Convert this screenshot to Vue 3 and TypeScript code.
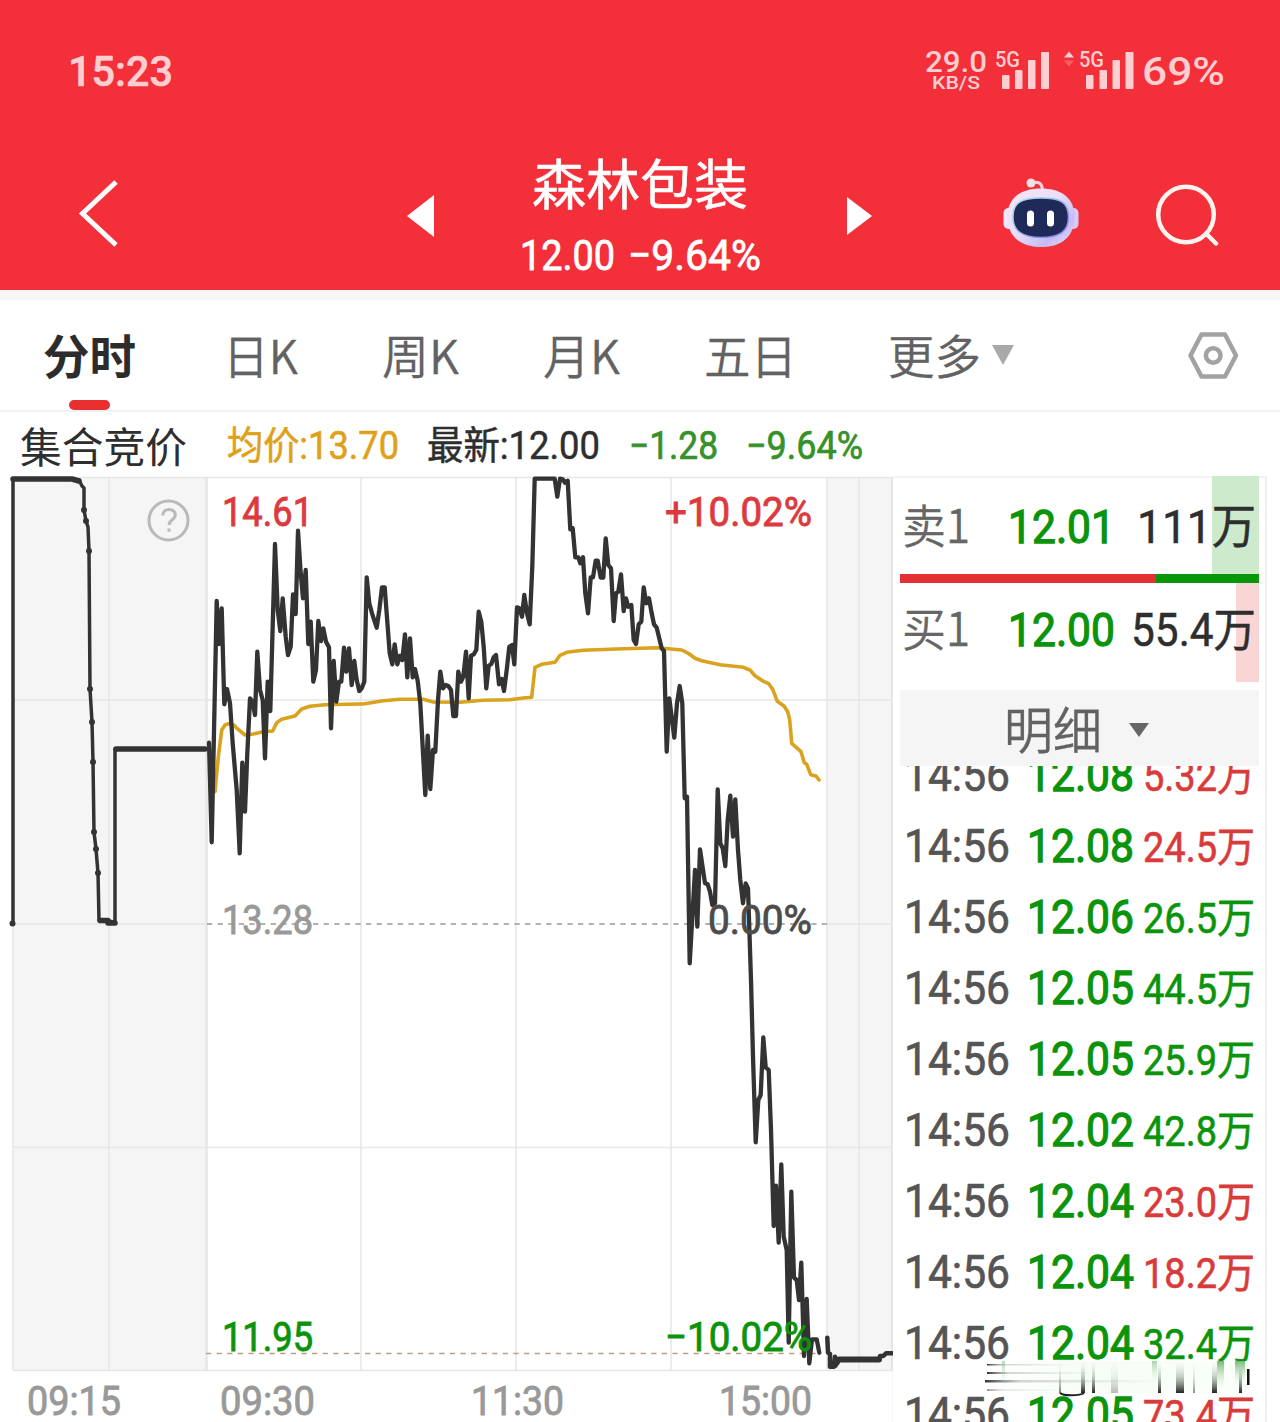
<script setup lang="ts">
import { h } from 'vue'

interface FitProps {
  t: string
  w: number
  s: number
  ml?: number
  wt?: number
  c?: string
  st?: number
}

/* One line of real text condensed to a fixed advance; its box ends on the baseline. */
const Fit = (p: FitProps) => {
  const height = Math.round(p.s * 0.74)
  const fill = p.c ?? 'currentColor'
  return h(
    'svg',
    { width: p.w, height, style: { marginLeft: `${p.ml ?? 0}px`, overflow: 'visible', flex: 'none', display: 'block' } },
    [
      h(
        'text',
        {
          x: 0,
          y: height,
          'font-size': p.s,
          'font-weight': p.wt ?? 400,
          fill,
          stroke: p.st ? fill : 'none',
          'stroke-width': p.st ?? 0,
          textLength: p.w,
          lengthAdjust: 'spacingAndGlyphs',
        },
        p.t,
      ),
    ],
  )
}
Fit.props = ['t', 'w', 's', 'ml', 'wt', 'c', 'st']

/* Series are kept in thirds of a pixel, relative to each segment's origin. */
type Segment = [number, number, string]
const trace = (segments: Segment[]): string =>
  segments
    .flatMap(([ox, oy, pts]) =>
      pts.split(' ').map((p) => {
        const [x, y] = p.split(',').map(Number)
        return `${(ox + x / 3).toFixed(1)},${(oy + y / 3).toFixed(1)}`
      }),
    )
    .join(' ')

const price = trace([
  [0, 470, '627,818 635,1117 650,393 657,522 665,415 673,703 681,657 690,700 698,820 710,960 719,1150 727,878 735,1025 742,850 750,685 758,697 765,735 772,545 780,660 788,690 795,865 803,635 811,723 825,222 833,420 841,483 848,385 857,500 864,555 872,530 879,373 887,432 894,182 902,310 909,385 917,300 925,522 932,455 940,635 948,600 955,453 963,513 970,475 978,515 987,532 993,775 1001,573 1009,695 1017,635 1024,635 1032,533 1039,605 1047,535 1055,645 1063,573 1070,630 1078,663'],
  [350, 470, '35,655 43,635 50,322 58,400 66,430 80,473 88,420 96,352 104,352 112,455 119,550 127,583 134,523 142,583 150,557 157,570 165,493 172,622 180,505 188,622 195,597 203,633 211,700 226,975 233,797 241,957 249,840 256,845 264,690 271,605 279,655 287,645 295,648 303,660 310,738 318,738 325,605 333,635 340,620 348,545 356,685 363,557 371,553 379,540 386,425 394,455 401,530 409,655 416,587 424,582 431,562 438,555 447,643 455,627 462,663 470,600 478,530 486,525 493,583 501,412 508,415 516,440 523,375 531,430 539,463 547,290 554,26 614,26 622,80 630,26 638,28 645,38 653,32 661,178 668,175 676,262 685,262 691,280 699,262 706,370 714,430 722,322 729,322 737,272 743,272 752,323 760,323 767,205 775,285 783,295 791,453 798,370 805,365 813,313 821,423 828,385 835,410 844,405 851,510 858,522 866,463 874,455 881,352 889,400 897,385 905,430 912,463 920,473 935,535 942,543 950,845 958,685 973,803 981,700 989,648 997,700 1004,985 1011,980'],
  [640, 620, '149,1030 165,750 172,920 180,688 195,790 203,793 210,815 217,855 225,850 233,508 241,670 248,685 256,738 263,600 271,527 279,650 286,538 294,690 301,780 309,850 317,790 324,805'],
  [700, 980, '153,0 159,230 167,487 175,360 182,345 190,172 197,262 206,270 213,450 221,738 228,617 236,788 244,553 251,770 260,810 266,1088 274,635 282,893 290,900 297,960 304,848 312,1128 320,957 328,1150 336,1078 350,1078 358,1118'],
])

const average = trace([
  [0, 470, '645,965 655,860 665,780 675,765 690,760 702,766 712,776 735,795 760,792 790,785 818,783 830,758 845,748 885,738 905,717 930,709 975,704 1078,702'],
  [350, 470, '40,702 100,692 150,688 220,688 250,696 330,697 400,691 480,689 520,684 545,682 555,592 575,583 615,577 630,556 650,547 700,541 800,537 920,533'],
  [640, 620, '68,85 125,90 145,100 165,115 185,122 240,134 310,142 330,150 345,167 370,184 385,190 398,208 412,244 432,258 443,275 449,300 455,370 483,395 493,428 500,433 512,464 528,468 537,480'],
])

const closing = trace([[700, 980, '382,1073 384,1118 390,1122 390,1160 402,1160 405,1130 412,1150 418,1138 538,1138 540,1128 550,1128 558,1120 575,1120']])

const auction = '13,923 13,479 72,479 79,480 82,486 84,488 84,510 86,521 88,527 89,551 90,689 92,722 93,762 94,832 96,849 98,873 99,920 115,922 115,749 206,749'
const dots = [[84, 510], [86, 521], [89, 551], [90, 689], [92, 722], [93, 762], [94, 832], [96, 849], [98, 873], [12.5, 923.5]]

const columns = [13, 109, 361, 516, 671, 827, 859]

const GREEN = '#0b940b'
const RED = '#dc3a3e'
const labels = [
  { x: 222, y: 526, w: 91, t: '14.61', c: RED },
  { x: 665, y: 526, w: 147, t: '+10.02%', c: RED },
  { x: 222, y: 934, w: 91, t: '13.28', c: '#999' },
  { x: 708, y: 934, w: 104, t: '0.00%', c: '#4c4c4c' },
  { x: 222, y: 1351, w: 91, t: '11.95', c: GREEN },
  { x: 665, y: 1351, w: 147, t: '−10.02%', c: GREEN },
  { x: 27, y: 1415, w: 94, t: '09:15', c: '#999' },
  { x: 220, y: 1415, w: 95, t: '09:30', c: '#999' },
  { x: 471, y: 1415, w: 93, t: '11:30', c: '#999' },
  { x: 719, y: 1415, w: 93, t: '15:00', c: '#999' },
]

const tabs = [
  { t: '日K', w: 75, ml: 87 },
  { t: '周K', w: 77, ml: 84 },
  { t: '月K', w: 77, ml: 84 },
  { t: '五日', w: 93, ml: 84 },
  { t: '更多', w: 93, ml: 91 },
]

const ticks = [
  ['12.08', '5.32万', 1],
  ['12.08', '24.5万', 1],
  ['12.06', '26.5万', 0],
  ['12.05', '44.5万', 0],
  ['12.05', '25.9万', 0],
  ['12.02', '42.8万', 0],
  ['12.04', '23.0万', 1],
  ['12.04', '18.2万', 1],
  ['12.04', '32.4万', 0],
  ['12.05', '73.4万', 1],
] as [string, string, number][]
</script>

<template>
  <div class="screen">
    <header class="top">
      <div class="status">
        <Fit t="15:23" :w="105" :s="43" :wt="500" :st=".6" :ml="1" />
        <div class="signals">
          <div class="speed">
            <Fit t="29.0" :w="62" :s="29" :wt="500" />
            <Fit t="KB/S" :w="48" :s="19" :wt="500" />
          </div>
          <svg class="signal" width="144" height="42" viewBox="994 49 144 42">
            <g fill="currentColor">
              <text x="995" y="67" font-size="21.5" font-weight="500" textLength="25" lengthAdjust="spacingAndGlyphs">5G</text>
              <rect x="1002" y="75" width="7.5" height="14" rx="1" />
              <rect x="1015" y="70" width="7.5" height="19" rx="1" />
              <rect x="1028" y="60" width="7.5" height="29" rx="1" />
              <rect x="1041" y="52" width="8" height="37" rx="1" />
              <path d="M1064 57.500l5-6 5 6z" />
              <path d="M1064 60.500l5 6 5-6z" opacity=".3" />
              <text x="1079" y="67" font-size="21.5" font-weight="500" textLength="25" lengthAdjust="spacingAndGlyphs">5G</text>
              <rect x="1086" y="75" width="7.5" height="14" rx="1" />
              <rect x="1099.500" y="70" width="7.500" height="19" rx="1" />
              <rect x="1112.500" y="60" width="7.500" height="29" rx="1" />
              <rect x="1125.500" y="52" width="8" height="37" rx="1" />
            </g>
          </svg>
          <Fit class="battery" t="69%" :w="83" :s="39.5" :wt="500" :ml="4" />
        </div>
      </div>
      <div class="nav">
        <svg class="back" width="44" height="70" viewBox="76 179 44 70" fill="none" stroke="#fff" stroke-width="5">
          <path d="M116 182 82.500 213.500 116 245" />
        </svg>
        <svg class="prev" width="27" height="42" viewBox="0 0 27 42"><path d="M0 21 27 0v42z" fill="#fff" /></svg>
        <div class="title">
          <Fit t="森林包装" :w="216" :s="54" :st=".5" />
          <div class="quote">
            <Fit t="12.00" :w="95" :s="43" :st=".8" />
            <Fit t="−9.64%" :w="133" :s="43" :st=".8" :ml="13" />
          </div>
        </div>
        <svg class="next" width="25" height="38" viewBox="0 0 25 38"><path d="M25 19 0 0v38z" fill="#fff" /></svg>
        <svg class="robot" width="76" height="72" viewBox="1003 177 76 72">
          <defs>
            <linearGradient id="shell" x1="0" y1="0" x2="1" y2="1">
              <stop offset="0" stop-color="#f9e6f3" />
              <stop offset=".45" stop-color="#e9dff8" />
              <stop offset=".75" stop-color="#c5bbf3" />
              <stop offset="1" stop-color="#eadcf5" />
            </linearGradient>
            <linearGradient id="rim" x1="0" y1="0" x2="1" y2="1">
              <stop offset="0" stop-color="#9fe6f4" />
              <stop offset="1" stop-color="#8c79e8" />
            </linearGradient>
          </defs>
          <path d="M1032 183c6-2 10 0 10.500 7" fill="none" stroke="#f8d3dd" stroke-width="3" />
          <circle cx="1031" cy="183" r="4.500" fill="#fbdfe7" />
          <rect x="1003.500" y="208" width="12" height="21" rx="5" fill="#eee6fa" />
          <rect x="1066.500" y="208" width="12" height="21" rx="5" fill="#d9c9f5" />
          <path d="M1041 188.500c19 0 31 8 33.500 24 1.500 23-12 34.500-33.500 34.500s-35-11.500-33.500-34.500c2.500-16 14.500-24 33.500-24z" fill="url(#shell)" />
          <path d="M1041 198c20 0 27.500 4.500 27.500 19s-9 20.500-27.500 20.500-28-6-28-20.500 8-19 28-19z" fill="#1f2a58" stroke="url(#rim)" stroke-width="1.500" />
          <rect x="1027" y="210.500" width="7" height="16" rx="3.500" fill="#fff" />
          <rect x="1047" y="210.500" width="7" height="16" rx="3.500" fill="#fff" />
        </svg>
        <svg class="search" width="64" height="64" viewBox="1155 183 64 64" fill="none" stroke="#fff3ee" stroke-width="4.500" stroke-linecap="round">
          <circle cx="1186" cy="214.500" r="27.800" />
          <path d="M1206 233.500l10 10" />
        </svg>
      </div>
    </header>

    <nav class="tabs">
      <Fit t="分时" :w="93" :s="47" :wt="700" :ml="43" c="#2c2c2c" />
      <Fit v-for="tab in tabs" :key="tab.t" :t="tab.t" :w="tab.w" :s="47" :ml="tab.ml" :wt="350" :st=".3" />
      <svg class="caret" width="22" height="20" viewBox="0 0 22 20"><path d="M0 0h22L11 20z" fill="#a9a9a9" /></svg>
      <svg class="gear" width="52" height="50" viewBox="1187 331 52 50" fill="none" stroke="#a2a2a2" stroke-width="4.500" stroke-linejoin="round">
        <path d="M1201.500 334.500h23.500l11 21-11 21h-23.500l-11-21z" />
        <circle cx="1213.200" cy="355.500" r="7.300" />
      </svg>
      <i class="underline"></i>
    </nav>

    <div class="summary">
      <Fit class="auction" t="集合竞价" :w="167" :s="41.500" :ml="20" />
      <Fit t="均价:13.70" :w="172" :s="38.500" :ml="40" :st=".6" c="#dfa118" />
      <Fit t="最新:12.00" :w="173" :s="38.500" :ml="28" :st=".5" />
      <Fit t="−1.28" :w="89" :s="38.500" :ml="29" :st=".7" c="#36912a" />
      <Fit t="−9.64%" :w="117" :s="38.500" :ml="28" :st=".7" c="#36912a" />
    </div>

    <main class="body">
      <svg class="chart" width="893" height="946" viewBox="0 476 893 946">
        <rect x="13" y="477" width="194" height="893" fill="#f5f5f5" />
        <rect x="827" y="477" width="65" height="893" fill="#f5f5f5" />
        <g stroke="#e6e6e6" stroke-width="1.500">
          <path v-for="x in columns" :key="x" :d="`M${x} 477V1370`" />
          <path d="M13 477.500H892M13 700H892M13 924H207M827 924H892M13 1147.500H892M13 1370.500H892" />
          <path d="M206.500 477V1370M892 477V1370" stroke-width="2.500" />
          <path d="M893 1370V1422" stroke="#f2f2f2" />
        </g>
        <path d="M207 924H827" stroke="#999" stroke-width="1.500" stroke-dasharray="5.300 5.300" />
        <path d="M206 1353.500H820" stroke="#bd9f80" stroke-width="1.500" stroke-dasharray="5.300 5.300" />
        <g fill="none" stroke="#b9b9b9" stroke-width="3">
          <circle cx="168.500" cy="520.500" r="19.500" />
          <path d="M162.800 515.500c0-8 12.500-8 12.500-.5 0 5-6.200 4.500-6.200 10" />
          <path d="M169 528.500v3.200" />
        </g>
        <g fill="none" stroke-linejoin="round" stroke-linecap="round">
          <polyline :points="average" stroke="#d9a21f" stroke-width="3.600" />
          <polyline :points="auction" stroke="#333" stroke-width="3.500" />
          <path d="M13 479H72L79 481M100 920.500H108V923H115M116 749H205" stroke="#333" stroke-width="5.500" />
          <polyline :points="price" stroke="#333" stroke-width="4.300" />
          <polyline :points="closing" stroke="#333" stroke-width="4.500" />
          <path d="M831 1365H835M839 1359.500H879" stroke="#333" stroke-width="6" />
        </g>
        <circle v-for="(d, i) in dots" :key="i" :cx="d[0]" :cy="d[1]" r="3" fill="#333" />
        <text
          v-for="l in labels"
          :key="l.t"
          :x="l.x"
          :y="l.y"
          :fill="l.c"
          :stroke="l.c"
          :textLength="l.w"
          font-size="41"
          stroke-width=".9"
          lengthAdjust="spacingAndGlyphs"
        >{{ l.t }}</text>
      </svg>

      <aside class="book">
        <div class="level ask">
          <Fit class="side" t="卖1" :w="68" :s="46" :ml="2" :wt="350" :st=".3" c="#666" />
          <Fit t="12.01" :w="107" :s="47" :ml="38" :st="1.300" :c="GREEN" />
          <Fit t="111万" :w="119" :s="47" :ml="22" :st=".5" />
        </div>
        <div class="ratio"><i></i></div>
        <div class="level bid">
          <Fit class="side" t="买1" :w="68" :s="46" :ml="2" :wt="350" :st=".3" c="#666" />
          <Fit t="12.00" :w="107" :s="47" :ml="38" :st="1.300" :c="GREEN" />
          <Fit t="55.4万" :w="125" :s="46" :ml="16" :st=".5" />
        </div>
        <div class="detail">
          <Fit t="明细" :w="98" :s="50" :wt="350" :st=".3" c="#626262" />
          <svg width="20" height="14" viewBox="0 0 20 14"><path d="M0 0h20L10 14z" fill="#666" /></svg>
        </div>
        <div class="ticks">
          <div v-for="(k, i) in ticks" :key="i" class="tick">
            <Fit t="14:56" :w="106" :s="47" :ml="4" :st=".7" c="#555" />
            <Fit :t="k[0]" :w="107" :s="47" :ml="17" :st="1.300" :c="GREEN" />
            <Fit :t="k[1]" :w="112" :s="42" :ml="9" :st=".6" :c="k[2] ? '#d93a3a' : GREEN" />
          </div>
          <svg class="smear" width="274" height="40" viewBox="982 1358 274 40">
            <defs>
              <linearGradient id="fadeX"><stop offset="0" stop-color="#333" /><stop offset=".2" stop-color="#aaa" stop-opacity=".5" /><stop offset="1" stop-color="#bbb" stop-opacity="0" /></linearGradient>
              <linearGradient id="fadeY" x1="0" y1="0" x2="0" y2="1"><stop offset="0" stop-color="#cfe3cf" stop-opacity="0" /><stop offset=".5" stop-color="#8a9a8a" stop-opacity=".5" /><stop offset="1" stop-color="#222" /></linearGradient>
              <linearGradient id="fadeTop" x1="0" y1="0" x2="0" y2="1"><stop offset="0" stop-color="#3f9a3f" stop-opacity=".7" /><stop offset="1" stop-color="#cfe8cf" stop-opacity="0" /></linearGradient>
              <linearGradient id="haze"><stop offset="0" stop-color="#fff" /><stop offset=".4" stop-color="#f5fdf5" /><stop offset="1" stop-color="#fafffa" /></linearGradient>
              <filter id="soft" x="-20%" y="0" width="140%" height="100%"><feGaussianBlur stdDeviation=".7 0" /></filter>
            </defs>
            <rect x="986" y="1361" width="265" height="32" fill="url(#haze)" />
            <g fill="url(#fadeX)">
              <rect x="987" y="1364" width="90" height="1.500" />
              <rect x="987" y="1372" width="110" height="2" />
              <rect x="985" y="1380" width="180" height="2.500" />
              <rect x="987" y="1389" width="80" height="2" opacity=".5" />
            </g>
            <g fill="url(#fadeTop)" filter="url(#soft)">
              <rect x="1002" y="1361" width="3" height="28" opacity=".5" />
              <rect x="1152" y="1361" width="5" height="22" opacity=".6" />
              <rect x="1217" y="1361" width="7" height="28" />
              <rect x="1235" y="1361" width="10" height="24" />
            </g>
            <g fill="url(#fadeY)" filter="url(#soft)">
              <rect x="1059" y="1361" width="2" height="32" opacity=".6" />
              <rect x="1081" y="1361" width="4" height="32" />
              <rect x="1092" y="1361" width="3" height="32" />
              <rect x="1111" y="1361" width="7" height="32" opacity=".3" />
              <rect x="1158" y="1361" width="3" height="32" />
              <rect x="1176" y="1361" width="8" height="32" />
              <rect x="1193" y="1361" width="2" height="32" opacity=".5" />
              <rect x="1212" y="1361" width="5" height="32" />
              <rect x="1239" y="1361" width="3" height="32" />
            </g>
            <path d="M1060 1393c3 3 20 3 24 0" fill="none" stroke="#222" stroke-width="2" />
            <rect x="1247" y="1369" width="2.500" height="16" fill="#111" />
          </svg>
        </div>
      </aside>
    </main>
  </div>
</template>

<style>
body {
  background: #fff;
}
</style>

<style scoped>
.screen {
  width: 1280px;
  height: 1422px;
  overflow: hidden;
  display: flex;
  flex-direction: column;
  background: #fff;
  color: #2e2e2e;
  font-family: Roboto, 'Noto Sans CJK SC', sans-serif;
}
.top {
  height: 290px;
  flex: none;
  background: #f32f39;
  border-bottom: 10px solid #f8f7f6;
  color: #fff;
}
.status {
  height: 86px;
  display: flex;
  align-items: flex-end;
  justify-content: space-between;
  padding: 0 55px 0 67px;
  color: #ffced0;
}
.signals {
  display: flex;
  align-items: flex-end;
}
.speed {
  display: flex;
  flex-direction: column;
  align-items: center;
  gap: 3px;
  margin: 0 7px -3px 0;
}
.signal {
  display: block;
  overflow: visible;
  margin-bottom: -5px;
}
.battery {
  margin-bottom: 1px;
}
.nav {
  display: flex;
  align-items: flex-start;
  height: 204px;
}
.nav > svg {
  flex: none;
}
.back {
  margin: 93px 0 0 76px;
}
.prev {
  margin: 109px 0 0 287px;
}
.title {
  width: 240px;
  margin: 79px 0 0 86px;
  display: flex;
  flex-direction: column;
  align-items: center;
  gap: 33px;
}
.quote {
  display: flex;
}
.next {
  margin: 111px 0 0 87px;
}
.robot {
  margin: 91px 0 0 131px;
}
.search {
  margin: 97px 0 0 76px;
}
.tabs {
  position: relative;
  height: 110px;
  flex: none;
  display: flex;
  align-items: flex-end;
  box-sizing: content-box;
  border-bottom: 2px solid #f1f1f1;
  color: #626262;
}
.tabs,
.side {
  font-family: 'Noto Sans CJK SC', Roboto, sans-serif;
}
.tabs > svg {
  margin-bottom: 36px;
}
.tabs > .caret {
  margin: 0 0 45px 11px;
}
.tabs > .gear {
  margin: 0 0 29px 173px;
}
.underline {
  position: absolute;
  left: 69px;
  bottom: 0;
  width: 41px;
  height: 10px;
  border-radius: 5px;
  background: #e93030;
}
.summary {
  height: 47px;
  flex: none;
  display: flex;
  align-items: flex-end;
  margin-bottom: 17px;
}
.auction {
  margin-bottom: -4px;
}
.body {
  display: flex;
  height: 946px;
}
.chart {
  flex: none;
  display: block;
}
.book {
  width: 359px;
  height: 946px;
  padding: 0 6px 0 7px;
  border-top: 2px solid #f3f3f3;
  border-right: 2px solid #f0f0f0;
  box-sizing: content-box;
}
.level {
  display: flex;
  align-items: flex-end;
  box-sizing: border-box;
}
.ask {
  height: 98px;
  margin-top: -2px;
  padding-bottom: 31px;
  background: linear-gradient(#cdeacd, #cdeacd) right / 47px 100% no-repeat;
}
.bid {
  height: 99px;
  padding-bottom: 36px;
  background: linear-gradient(#fad5d6, #fad5d6) right / 23px 100% no-repeat;
}
.ratio {
  height: 9px;
  background: #089708;
}
.ratio i {
  display: block;
  width: 256px;
  height: 9px;
  background: #e43136;
}
.detail {
  display: flex;
  align-items: center;
  justify-content: center;
  gap: 27px;
  height: 72px;
  margin-top: 8px;
  padding: 4px 7px 0 0;
  background: #f5f5f5;
}
.ticks {
  position: relative;
  height: 656px;
  overflow: hidden;
}
.tick {
  height: 71px;
  display: flex;
  align-items: flex-end;
}
.tick:first-child {
  height: 25px;
}
.smear {
  position: absolute;
  left: 82px;
  top: 592px;
}
</style>
